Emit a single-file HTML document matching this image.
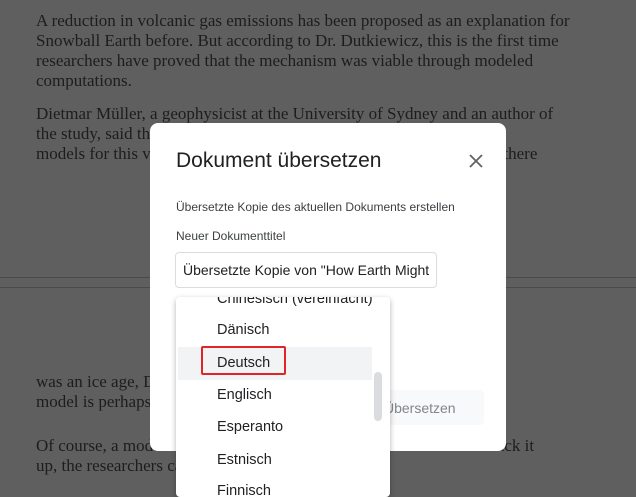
<!DOCTYPE html>
<html><head><meta charset="utf-8"><style>
body{margin:0;width:636px;height:487px;overflow:hidden;background:#5f5f5f;position:relative;font-family:"Liberation Sans",sans-serif}
.t{position:absolute;left:36px;font-family:"Liberation Serif",serif;font-size:17px;line-height:20px;color:#1d1d1d;white-space:nowrap}
.line{position:absolute;left:0;width:636px;height:1px;background:#4a4a4a}
.dlg{position:absolute;left:150px;top:123px;width:356px;height:328px;background:#fff;border-radius:8px}
.a{position:absolute;white-space:nowrap}
.dd{position:absolute;left:176px;top:297px;width:214px;height:200px;background:#fff;box-shadow:0 2px 6px rgba(0,0,0,.3);border-radius:4px;overflow:hidden}
.it{position:absolute;left:41px;font-size:14.5px;color:#202124}
</style></head><body>
<div class="t" style="top:11px">A reduction in volcanic gas emissions has been proposed as an explanation for<br>Snowball Earth before. But according to Dr. Dutkiewicz, this is the first time<br>researchers have proved that the mechanism was viable through modeled<br>computations.</div>
<div class="t" style="top:104px">Dietmar Müller, a geophysicist at the University of Sydney and an author of<br>the study, said that scientists had not previously had quantitative<br>models for this volcanic cooling mechanism, and that we now know there</div>
<div class="line" style="top:277px"></div>
<div class="line" style="top:287px"></div>
<div class="t" style="top:372px">was an ice age, Dr. Müller said, and now this reconstruction<br>model is perhaps the best explanation we have.</div>
<div class="t" style="top:436px">Of course, a model is only a model and without real-world data to back it<br>up, the researchers can only make their conclusions.</div>
<div class="dlg">
<div class="a" style="left:26px;top:26px;font-size:21px;color:#202124">Dokument übersetzen</div>
<svg class="a" style="left:318px;top:30px" width="16" height="16" viewBox="0 0 16 16"><path d="M2 2L14 14M14 2L2 14" stroke="#5f6368" stroke-width="1.8"/></svg>
<div class="a" style="left:26px;top:77px;font-size:12px;color:#3c4043">Übersetzte Kopie des aktuellen Dokuments erstellen</div>
<div class="a" style="left:26px;top:106px;font-size:12px;color:#3c4043">Neuer Dokumenttitel</div>
<div class="a" style="left:25px;top:129px;width:260px;height:34px;border:1px solid #dadce0;border-radius:4px;overflow:hidden"><div style="padding:9px 0 0 7px;font-size:14px;color:#202124;white-space:nowrap">Übersetzte Kopie von "How Earth Might</div></div>
<div class="a" style="left:220px;top:267px;width:114px;height:35px;background:#f8f9fa;border-radius:4px"><div style="padding:10px 0 0 14px;font-size:14px;color:#80868b">Übersetzen</div></div>
</div>
<div class="dd">
<div class="it" style="top:-6px">Chinesisch (vereinfacht)</div>
<div class="it" style="top:25px">Dänisch</div>
<div style="position:absolute;left:2px;top:50px;width:194px;height:33px;background:#f1f3f4"></div>
<div class="it" style="top:58px">Deutsch</div>
<div style="position:absolute;left:25px;top:49px;width:85px;height:29px;border:2px solid #e0242a;border-radius:2px;box-sizing:border-box"></div>
<div class="it" style="top:90px">Englisch</div>
<div class="it" style="top:122px">Esperanto</div>
<div class="it" style="top:155px">Estnisch</div>
<div class="it" style="top:186px">Finnisch</div>
<div style="position:absolute;left:198px;top:75px;width:8px;height:49px;background:#dadce0;border-radius:4px"></div>
</div>
</body></html>
